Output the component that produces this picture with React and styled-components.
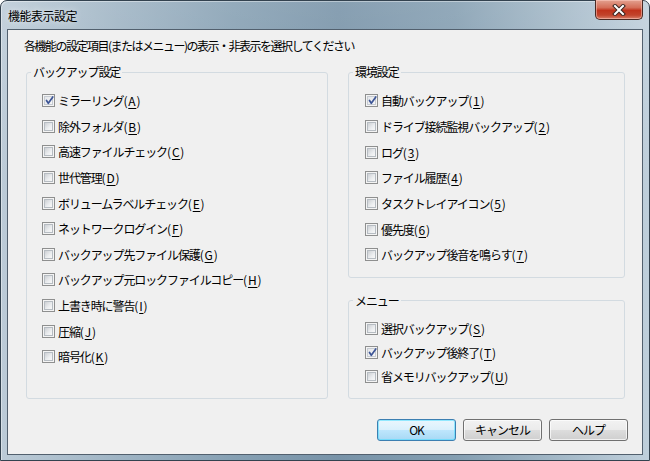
import React from "react";
import styled, { createGlobalStyle } from "styled-components";

const Global = createGlobalStyle`
  body {
    margin: 0;
    background: #ffffff;
    font-family: "Noto Sans CJK JP", "Liberation Sans", sans-serif;
  }
`;

const Window = styled.div`
  width: 650px;
  height: 461px;
  box-sizing: border-box;
  display: flex;
  flex-direction: column;
  padding: 0 6px 7px 6px;
  border: 1px solid #33424f;
  border-radius: 7px 7px 0 0;
  background:
    linear-gradient(180deg, rgba(255, 255, 255, 0.12) 0%, rgba(255, 255, 255, 0) 40%),
    linear-gradient(90deg, #bccbd7 0%, #9fb4c4 18%, #86a0b3 36%, #7893a8 52%, #849eb1 70%, #a3b8c7 86%, #bfcfdb 100%);
  box-shadow: inset 1px 1px 0 rgba(255, 255, 255, 0.4);
`;

const TitleBar = styled.div`
  height: 28px;
  flex: none;
  display: flex;
  align-items: center;
  justify-content: space-between;
`;

const Title = styled.div`
  margin-left: 1px;
  font-size: 12px;
  letter-spacing: -0.5px;
  color: #000;
  text-shadow: 0 0 6px rgba(255, 255, 255, 0.8);
`;

const CloseButton = styled.div`
  align-self: flex-start;
  margin-top: -1px;
  width: 48px;
  height: 20px;
  box-sizing: border-box;
  border: 1px solid #4a2a24;
  border-top: none;
  border-radius: 0 0 5px 5px;
  background: linear-gradient(180deg, #e3a190 0%, #d46e58 40%, #c0331c 55%, #c2442c 80%, #d8806a 100%);
  box-shadow: inset 0 0 0 1px rgba(255, 210, 200, 0.5);
  display: flex;
  align-items: center;
  justify-content: center;
`;

const Client = styled.div`
  flex: 1;
  display: flex;
  flex-direction: column;
  background: #f0f0f0;
  border: 1px solid #52606e;
  padding: 8px 14px 13px 16px;
  font-size: 12px;
  letter-spacing: -1.1px;
  color: #000;
`;

const Instruction = styled.div`
  line-height: 16px;
  height: 16px;
  letter-spacing: -1.5px;
  white-space: nowrap;
`;

const Groups = styled.div`
  flex: 1;
  margin: 11px 3px 0 2px;
  display: grid;
  grid-template-columns: 302px 1fr;
  column-gap: 20px;
`;

const Column = styled.div`
  display: flex;
  flex-direction: column;
  gap: 16px;
`;

const Group = styled.fieldset`
  margin: 0;
  padding: 0;
  min-width: 0;
  border: 1px solid #d3dbe1;
  border-radius: 3px;
  flex: ${(p) => (p.$grow ? 1 : "none")};
`;

const Legend = styled.legend`
  margin-left: 4px;
  padding: 0 2px;
  line-height: 14px;
  font-size: 12px;
`;

const List = styled.div`
  padding: 9px 0 9px ${(p) => p.$indent}px;
  display: flex;
  flex-direction: column;
`;

const Row = styled.label`
  display: flex;
  align-items: center;
  gap: 3px;
  height: ${(p) => p.$h}px;
  white-space: nowrap;
`;

const Mnemonic = styled.span`
  letter-spacing: 0.8px;
`;

const Box = styled.span`
  width: 13px;
  height: 13px;
  flex: none;
  box-sizing: border-box;
  border: 1px solid #8e8f8f;
  padding: 1px;
  background: #f4f4f4;
  display: flex;
`;

const Inner = styled.span`
  flex: 1;
  box-sizing: border-box;
  border: 1px solid ${(p) => (p.$checked ? "#c6cbd2" : "#b6bcc2")};
  background: ${(p) =>
    p.$checked
      ? "linear-gradient(135deg, #e4e6e9 0%, #f7f7f8 100%)"
      : "linear-gradient(135deg, #cdd0d4 0%, #eceef0 60%, #f8f8f8 100%)"};
  position: relative;
`;

const Tick = styled.svg`
  position: absolute;
  left: -1px;
  top: -2px;
`;

const Key = styled.u`
  text-decoration-thickness: 1px;
  text-underline-offset: 2px;
`;

const ButtonRow = styled.div`
  margin-top: 20px;
  display: flex;
  justify-content: flex-end;
  gap: 7px;
`;

const Button = styled.button`
  width: 79px;
  height: 22px;
  box-sizing: border-box;
  border-radius: 3px;
  font-family: "Noto Sans CJK JP", "Liberation Sans", sans-serif;
  font-size: 12px;
  letter-spacing: -1px;
  color: #000;
  padding: 0;
  border: 1px solid ${(p) => (p.$primary ? "#3c7fb1" : "#707070")};
  background: ${(p) =>
    p.$primary
      ? "linear-gradient(180deg, #eaf6fd 0%, #d9f0fc 50%, #bee6fd 51%, #a7d9f5 100%)"
      : "linear-gradient(180deg, #f2f2f2 0%, #ebebeb 50%, #dddddd 51%, #cfcfcf 100%)"};
  box-shadow: inset 0 0 0 1px
    ${(p) => (p.$primary ? "rgba(72, 220, 255, 0.55)" : "rgba(255, 255, 255, 0.7)")};
`;

function Check({ checked }) {
  return (
    <Box>
      <Inner $checked={checked}>
        {checked && (
          <Tick width="11" height="11" viewBox="0 0 11 11">
            <path
              d="M2.5 5.5 L4.3 8.3 L8.8 2"
              fill="none"
              stroke="#3d5596"
              strokeWidth="1.7"
              strokeLinecap="round"
              strokeLinejoin="round"
            />
          </Tick>
        )}
      </Inner>
    </Box>
  );
}

function Option({ label, k, checked, h }) {
  return (
    <Row $h={h}>
      <Check checked={checked} />
      <span>
        {label}
        <Mnemonic>
          (<Key>{k}</Key>)
        </Mnemonic>
      </span>
    </Row>
  );
}

const backup = [
  ["ミラーリング", "A", true],
  ["除外フォルダ", "B"],
  ["高速ファイルチェック", "C"],
  ["世代管理", "D"],
  ["ボリュームラベルチェック", "E"],
  ["ネットワークログイン", "F"],
  ["バックアップ先ファイル保護", "G"],
  ["バックアップ元ロックファイルコピー", "H"],
  ["上書き時に警告", "I"],
  ["圧縮", "J"],
  ["暗号化", "K"],
];

const env = [
  ["自動バックアップ", "1", true],
  ["ドライブ接続監視バックアップ", "2"],
  ["ログ", "3"],
  ["ファイル履歴", "4"],
  ["タスクトレイアイコン", "5"],
  ["優先度", "6"],
  ["バックアップ後音を鳴らす", "7"],
];

const menu = [
  ["選択バックアップ", "S"],
  ["バックアップ後終了", "T", true],
  ["省メモリバックアップ", "U"],
];

export default function App() {
  return (
    <>
      <Global />
      <Window>
        <TitleBar>
          <Title>機能表示設定</Title>
          <CloseButton>
            <svg width="14" height="12" viewBox="0 0 14 12">
              <path d="M3 2 L11 10 M11 2 L3 10" stroke="#3b2520" strokeWidth="4" strokeLinecap="square" />
              <path d="M3 2 L11 10 M11 2 L3 10" stroke="#ffffff" strokeWidth="2" strokeLinecap="square" />
            </svg>
          </CloseButton>
        </TitleBar>
        <Client>
          <Instruction>各機能の設定項目(またはメニュー)の表示・非表示を選択してください</Instruction>
          <Groups>
            <Group $grow>
              <Legend>バックアップ設定</Legend>
              <List $indent={15}>
                {backup.map(([l, k, c]) => (
                  <Option key={k} label={l} k={k} checked={c} h={25.6} />
                ))}
              </List>
            </Group>
            <Column>
              <Group>
                <Legend>環境設定</Legend>
                <List $indent={16}>
                  {env.map(([l, k, c]) => (
                    <Option key={k} label={l} k={k} checked={c} h={25.7} />
                  ))}
                </List>
              </Group>
              <Group $grow>
                <Legend>メニュー</Legend>
                <List $indent={16}>
                  {menu.map(([l, k, c]) => (
                    <Option key={k} label={l} k={k} checked={c} h={24} />
                  ))}
                </List>
              </Group>
            </Column>
          </Groups>
          <ButtonRow>
            <Button $primary>OK</Button>
            <Button>キャンセル</Button>
            <Button>ヘルプ</Button>
          </ButtonRow>
        </Client>
      </Window>
    </>
  );
}
